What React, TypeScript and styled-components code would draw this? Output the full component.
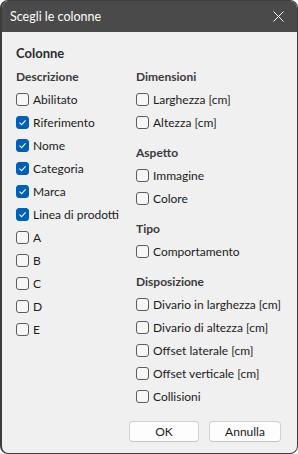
import React from "react";
import styled, { createGlobalStyle } from "styled-components";

const GlobalStyle = createGlobalStyle`
    html, body {
        margin: 0;
        padding: 0;
        background: #ffffff;
    }
    body {
        font-family: "Lato", "Liberation Sans", sans-serif;
    }
`;

const Dialog = styled.div`
    width: 298px;
    height: 454px;
    box-sizing: border-box;
    display: flex;
    flex-direction: column;
    background-color: #f0f0f0;
    border: 1px solid #3d3d3d;
    border-left-width: 2px;
    border-radius: 8px;
    overflow: hidden;
`;

const TitleBar = styled.div`
    height: 31px;
    flex-shrink: 0;
    display: flex;
    align-items: center;
    justify-content: space-between;
    padding: 0 9px 0 8px;
    background-color: #4a4a4a;
    color: #ffffff;
    font-size: 12.5px;
`;

const CloseButton = styled.button`
    width: 20px;
    height: 20px;
    padding: 0;
    display: flex;
    align-items: center;
    justify-content: center;
    background: none;
    border: none;
    color: #ffffff;
`;

const Body = styled.div`
    flex: 1;
    display: flex;
    flex-direction: column;
    padding: 11px 16px 11px 14px;
`;

const Heading = styled.div`
    font-size: 13px;
    font-weight: 700;
    color: #2b2b2b;
    height: 20px;
    line-height: 20px;
`;

const Columns = styled.div`
    display: grid;
    grid-template-columns: 120px 1fr;
    margin-top: 2px;
`;

const Column = styled.div`
    display: flex;
    flex-direction: column;
    gap: 7px;
`;

const Group = styled.div`
    display: flex;
    flex-direction: column;
`;

const GroupTitle = styled.div`
    height: 23px;
    line-height: 23px;
    font-size: 12px;
    font-weight: 700;
    color: #3a3a3a;
`;

const Row = styled.label`
    height: 23px;
    display: flex;
    align-items: center;
    gap: 4px;
    font-size: 12px;
    color: #1b1b1b;
    white-space: nowrap;
`;

const Box = styled.span<{ checked: boolean }>`
    width: 13px;
    height: 13px;
    flex-shrink: 0;
    box-sizing: border-box;
    border-radius: 3px;
    display: flex;
    align-items: center;
    justify-content: center;
    border: 1px solid ${({ checked }) => (checked ? "#005fb8" : "#5c5c5c")};
    background-color: ${({ checked }) => (checked ? "#005fb8" : "#f7f7f7")};
`;

const Footer = styled.div`
    margin-top: auto;
    display: flex;
    justify-content: flex-end;
    gap: 10px;
`;

const Button = styled.button<{ wide?: boolean }>`
    width: ${({ wide }) => (wide ? "72px" : "70px")};
    height: 21px;
    padding: 0;
    border: 1px solid #d2d2d2;
    border-bottom-color: #c4c4c4;
    border-radius: 4px;
    background-color: #fdfdfd;
    font-family: "Lato", "Liberation Sans", sans-serif;
    font-size: 12px;
    color: #1b1b1b;
`;

const Check = ({ label, checked = false }: { label: string; checked?: boolean }) => (
    <Row>
        <Box checked={checked}>
            {checked && (
                <svg width="9" height="9" viewBox="0 0 9 9">
                    <path d="M1.5 4.6 L3.6 6.6 L7.6 2.4" fill="none" stroke="#ffffff" strokeWidth="1.1" />
                </svg>
            )}
        </Box>
        {label}
    </Row>
);

const left = [
    { label: "Abilitato", checked: false },
    { label: "Riferimento", checked: true },
    { label: "Nome", checked: true },
    { label: "Categoria", checked: true },
    { label: "Marca", checked: true },
    { label: "Linea di prodotti", checked: true },
    { label: "A", checked: false },
    { label: "B", checked: false },
    { label: "C", checked: false },
    { label: "D", checked: false },
    { label: "E", checked: false },
];

const right = [
    { title: "Dimensioni", items: ["Larghezza [cm]", "Altezza [cm]"] },
    { title: "Aspetto", items: ["Immagine", "Colore"] },
    { title: "Tipo", items: ["Comportamento"] },
    {
        title: "Disposizione",
        items: [
            "Divario in larghezza [cm]",
            "Divario di altezza [cm]",
            "Offset laterale [cm]",
            "Offset verticale [cm]",
            "Collisioni",
        ],
    },
];

const App = () => {
    return (
        <>
            <GlobalStyle />
            <Dialog>
                <TitleBar>
                    <span>Scegli le colonne</span>
                    <CloseButton aria-label="Chiudi">
                        <svg width="11" height="11" viewBox="0 0 11 11">
                            <path d="M0.5 0.5 L10.5 10.5 M10.5 0.5 L0.5 10.5" stroke="#ffffff" strokeWidth="1" />
                        </svg>
                    </CloseButton>
                </TitleBar>
                <Body>
                    <Heading>Colonne</Heading>
                    <Columns>
                        <Column>
                            <Group>
                                <GroupTitle>Descrizione</GroupTitle>
                                {left.map((item) => (
                                    <Check key={item.label} label={item.label} checked={item.checked} />
                                ))}
                            </Group>
                        </Column>
                        <Column>
                            {right.map((group) => (
                                <Group key={group.title}>
                                    <GroupTitle>{group.title}</GroupTitle>
                                    {group.items.map((label) => (
                                        <Check key={label} label={label} />
                                    ))}
                                </Group>
                            ))}
                        </Column>
                    </Columns>
                    <Footer>
                        <Button>OK</Button>
                        <Button wide>Annulla</Button>
                    </Footer>
                </Body>
            </Dialog>
        </>
    );
};

export default App;
